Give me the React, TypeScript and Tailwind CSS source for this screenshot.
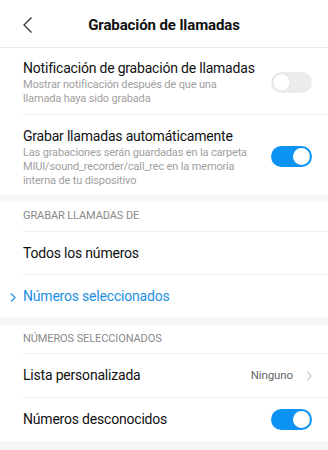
import React from "react";

function Toggle({ on }: { on: boolean }) {
  return on ? (
    <div className="w-[41px] h-[21px] rounded-full bg-[#0c92f2] flex items-center justify-end pr-[2px]">
      <div className="w-[17px] h-[17px] rounded-full bg-white" />
    </div>
  ) : (
    <div className="w-[41px] h-[21px] rounded-full bg-[#ececec] flex items-center justify-start pl-[2px]">
      <div className="w-[17px] h-[17px] rounded-full bg-white shadow-[0_0_1px_rgba(0,0,0,0.25)]" />
    </div>
  );
}

function Divider() {
  return <div className="ml-[23px] h-px bg-[#efefef]" />;
}

function Gap({ h }: { h: string }) {
  return <div className={`${h} bg-[#f7f7f7]`} />;
}

export default function App() {
  return (
    <div
      className="w-[328px] min-h-[450px] bg-[#f7f7f7]"
      style={{ fontFamily: "Roboto, 'Noto Sans', sans-serif" }}
    >
      <div className="bg-white">
        {/* Header */}
        <div className="relative h-[47px] flex items-center justify-center border-b border-[#ececec] box-content">
          <svg
            className="absolute left-[22px] top-[17px]"
            width="11"
            height="16"
            viewBox="0 0 11 16"
            fill="none"
          >
            <path d="M9.5 0.5 L2 8 L9.5 15.5" stroke="#333" strokeWidth="1.3" />
          </svg>
          <span className="text-[15px] font-bold text-[#111] tracking-[-0.1px] mt-[3px]">
            Grabación de llamadas
          </span>
        </div>

        {/* Row 1 */}
        <div className="flex items-center pl-[23px] pr-[16px] pt-[10px] pb-[8px]">
          <div className="flex-1">
            <div className="text-[14px] leading-[20px] tracking-[-0.2px] text-[#111]">
              Notificación de grabación de llamadas
            </div>
            <div className="text-[11px] leading-[14px] tracking-[-0.15px] text-[#a0a0a0] pr-[40px]">
              Mostrar notificación después de que una llamada haya sido grabada
            </div>
          </div>
          <Toggle on={false} />
        </div>
        <Divider />

        {/* Row 2 */}
        <div className="flex items-center pl-[23px] pr-[16px] pt-[11px] pb-[7px]">
          <div className="flex-1">
            <div className="text-[14px] leading-[20px] tracking-[-0.2px] text-[#111]">
              Grabar llamadas automáticamente
            </div>
            <div className="text-[11px] leading-[14px] tracking-[-0.15px] text-[#a0a0a0] pr-[14px]">
              Las grabaciones serán guardadas en la carpeta MIUI/sound_recorder/call_rec en la memoria interna de tu dispositivo
            </div>
          </div>
          <div className="self-start mt-[20px]">
            <Toggle on={true} />
          </div>
        </div>
      </div>

      <Gap h="h-[7px]" />

      <div className="bg-white">
        <div className="h-[29px] flex items-center pl-[23px] text-[11px] tracking-[-0.1px] text-[#8a8a8a] uppercase">
          Grabar llamadas de
        </div>
        <Divider />
        <div className="h-[42px] flex items-center pl-[23px] text-[14px] tracking-[-0.2px] text-[#111]">
          Todos los números
        </div>
        <Divider />
        <div className="relative h-[42px] flex items-center pl-[23px] text-[14px] tracking-[-0.2px] text-[#1a8fe3]">
          <svg
            className="absolute left-[10px] top-[18px]"
            width="6"
            height="9"
            viewBox="0 0 6 9"
            fill="none"
          >
            <path d="M1 0.5 L5 4.5 L1 8.5" stroke="#1a8fe3" strokeWidth="1.1" />
          </svg>
          Números seleccionados
        </div>
      </div>

      <Gap h="h-[8px]" />

      <div className="bg-white">
        <div className="h-[28px] flex items-center pl-[23px] text-[11px] tracking-[-0.1px] text-[#8a8a8a] uppercase">
          Números seleccionados
        </div>
        <Divider />
        <div className="h-[43px] flex items-center pl-[23px] pr-[16px] text-[14px] tracking-[-0.2px] text-[#111]">
          <span className="flex-1">Lista personalizada</span>
          <span className="text-[11.5px] tracking-[-0.1px] text-[#666]">Ninguno</span>
          <svg className="ml-[13px]" width="6" height="10" viewBox="0 0 6 10" fill="none">
            <path d="M1 0.5 L5 5 L1 9.5" stroke="#bbb" strokeWidth="1.1" />
          </svg>
        </div>
        <Divider />
        <div className="h-[43px] flex items-center pl-[23px] pr-[16px] text-[14px] tracking-[-0.2px] text-[#111]">
          <span className="flex-1">Números desconocidos</span>
          <Toggle on={true} />
        </div>
      </div>
    </div>
  );
}
